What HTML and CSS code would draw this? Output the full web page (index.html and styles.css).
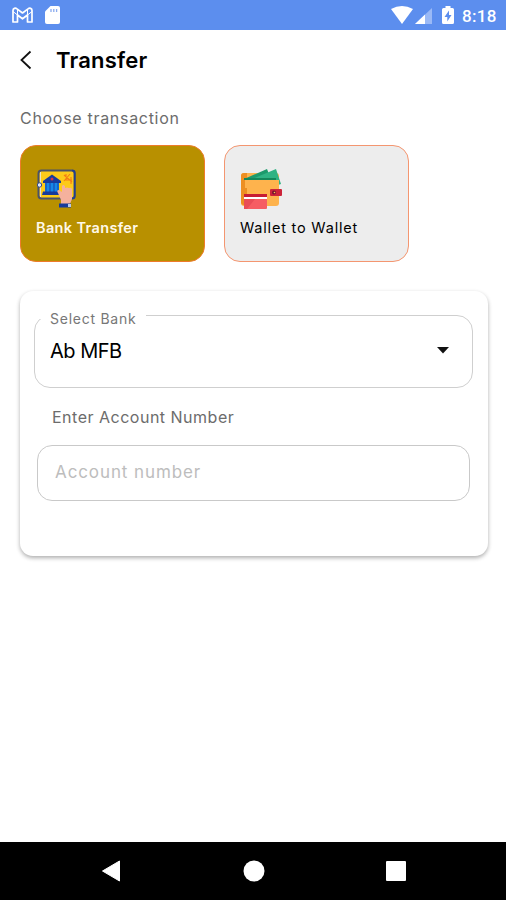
FILE: index.html
```html
<!DOCTYPE html>
<html lang="en">
<head>
  <meta charset="UTF-8" />
  <meta name="viewport" content="width=device-width, initial-scale=1.0" />
  <title>Transfer</title>
  <link rel="stylesheet" href="styles.css">
</head>
<body>
  <div class="status-bar">
    <div class="status-left">
      <svg width="21" height="17" viewBox="0 0 21 17" fill="none" stroke="#fff" stroke-width="1.7" stroke-linejoin="round">
        <path d="M1 15V3.5C1 1.2 3.4.6 5 1.9L10.5 6 16 1.9C17.6.6 20 1.2 20 3.5V15H15.5V8L10.5 11.8 5.5 8V15Z"/>
        <path d="M1 4.5L5.5 8V2.5M20 4.5L15.5 8V2.5" stroke-width="1"/>
      </svg>
      <svg width="17" height="20" viewBox="0 0 17 20">
        <path fill="#fff" d="M6.5 1H14a2 2 0 0 1 2 2V17a2 2 0 0 1-2 2H3a2 2 0 0 1-2-2V6.5Z"/>
        <path stroke="#8babef" stroke-width="1.3" d="M7 4V7M9.8 4V7M12.6 4V7"/>
      </svg>
    </div>
    <div class="status-right">
      <svg class="wifi" width="22" height="18" viewBox="0 0 22 18"><path fill="#fff" d="M0 3Q11-3 22 3L11 18Z"/></svg>
      <svg class="signal" width="17" height="16" viewBox="0 0 17 16"><path fill="#9ab9f6" d="M17 0V16H0Z"/><path fill="#fff" d="M10 6.5V16H0Z"/></svg>
      <svg class="battery" width="12" height="18" viewBox="0 0 12 18">
        <path fill="#fff" d="M3.5 2V0H8.5V2H10.5Q12 2 12 3.5V16.5Q12 18 10.5 18H1.5Q0 18 0 16.5V3.5Q0 2 1.5 2Z"/>
        <path fill="#5c8eee" d="M7 4.5L2.5 11H5.3V15.5L9.5 9H7Z"/>
      </svg>
      <span class="clock">8:18</span>
    </div>
  </div>

  <header class="header">
    <svg width="12" height="20" viewBox="0 0 12 20" fill="none" stroke="#111" stroke-width="1.8"><path d="M10.5 1.5L1.5 10L10.5 18.5"/></svg>
    <h1>Transfer</h1>
  </header>

  <main>
    <p class="choose">Choose transaction</p>
    <div class="options">
      <div class="option active">
        <svg width="42" height="42" viewBox="0 0 42 42">
          <rect x="2.5" y="2.5" width="36" height="28" rx="3" fill="#fdca19" stroke="#4b5268" stroke-width="2"/>
          <path d="M36 2.5H37Q38.8 2.5 38.8 5V28Q38.8 30.5 37 30.5H34" fill="none" stroke="#203f91" stroke-width="1.6"/>
          <path d="M4.5 4V29" stroke="#e9e3c5"/>
          <circle cx="3.5" cy="17" r="2.2" fill="#dce7fa" stroke="#374c86"/>
          <path fill="#173b9c" d="M7 13L16 6.5L25 13V15H7Z"/>
          <path fill="#1687e8" d="M9 15H23V24H9Z"/>
          <path stroke="#1453b8" stroke-width="1.3" d="M10 15V24M14 15V24M18 15V24M22 15V24"/>
          <path fill="#173b9c" d="M7 23.5H25V27H6Z"/>
          <circle cx="16" cy="11" r="1.5" fill="#d53645"/>
          <path fill="none" stroke="#f47b16" stroke-width="1.1" d="M28 7L36 14M28 13L34 6M30 6V12L36 12M35 9V16"/>
          <path fill="#f5b19d" d="M22 25Q20 22 23 22L26 24V18Q27 16 29 18V20Q31 19 33 20Q35 19 36 21V31L34 36H25V32Z"/>
          <rect x="23" y="35.5" width="12" height="4" fill="#173b9c"/>
          <path fill="#b9cbe7" d="M32 36H35V39H32Z"/>
        </svg>
        <span class="option-name">Bank Transfer</span>
      </div>
      <div class="option">
        <svg width="42" height="42" viewBox="0 0 42 42">
          <rect x="1" y="5" width="38" height="33" rx="3" fill="#feb34d"/>
          <path fill="#ed8f22" d="M4 5H7V37H4Q1 37 1 34V8Q1 5 4 5Z"/>
          <path fill="#1d9a6c" d="M4 11L27 1L31 11Z"/>
          <path fill="#2fb383" d="M12 11L36 1L41 16L38 17L36 12Z"/>
          <path fill="#148759" d="M4 10H36V12H4Z"/>
          <path fill="#feb34d" d="M5 12H39V20H5Z"/>
          <rect x="30" y="21" width="12" height="7" rx="1" fill="#cc2439"/>
          <circle cx="34" cy="24.5" r="2" fill="#74142e"/>
          <circle cx="34.5" cy="24.5" r=".8" fill="#ffc64d"/>
          <rect x="4" y="26" width="23" height="15" rx="1" fill="#f65d63"/>
          <path fill="#c71d34" d="M4 26H27V29H4Z"/>
          <path fill="#fff" d="M4 29H27V31H4Z"/>
          <path fill="#e94d57" d="M4 31H15L7 41H4Z"/>
        </svg>
        <span class="option-name">Wallet to Wallet</span>
      </div>
    </div>

    <section class="form-card">
      <fieldset class="bank">
        <legend>Select Bank</legend>
        <span class="bank-name">Ab MFB</span>
        <svg width="12" height="7" viewBox="0 0 12 7"><path fill="#111" d="M0 0H12L6 6.5Z"/></svg>
      </fieldset>
      <p class="account-label">Enter Account Number</p>
      <div class="account-input">Account number</div>
    </section>
  </main>

  <nav class="nav-bar">
    <svg width="20" height="22" viewBox="0 0 20 22"><path fill="#fff" stroke="#fff" stroke-linejoin="round" d="M1.5 11L18.5 1V21Z"/></svg>
    <svg width="22" height="22" viewBox="0 0 22 22"><circle cx="11" cy="11" r="10.5" fill="#fff"/></svg>
    <svg width="20" height="20" viewBox="0 0 20 20"><rect width="20" height="20" rx="1" fill="#fff"/></svg>
  </nav>
</body>
</html>
```
FILE: styles.css
```css
* { margin: 0; padding: 0; box-sizing: border-box; }
body {
  font-family: Inter, sans-serif;
  background: #fff;
  height: 900px;
  display: flex;
  flex-direction: column;
  overflow: hidden;
  color: #000;
  white-space: nowrap;
}
svg { display: block; flex: none; }
.status-bar {
  height: 30px;
  background: #5c8eee;
  display: flex;
  justify-content: space-between;
  padding: 0 9px 0 12px;
}
.status-left {
  display: flex;
  align-items: center;
  gap: 11px;
}
.status-right {
  display: flex;
  align-items: flex-end;
  padding-bottom: 6px;
}
.signal { margin-left: 2px; }
.battery { margin-left: 10px; }
.clock {
  width: 35px;
  margin-left: 8px;
  font: 500 17px/16px Roboto, sans-serif;
  letter-spacing: 0.3px;
  color: #fff;
}
.header {
  height: 60px;
  display: flex;
  align-items: center;
  padding-left: 20px;
  gap: 24px;
}
h1 {
  font-size: 22px;
  font-weight: 600;
  line-height: 30px;
  letter-spacing: 0.2px;
}
main { flex: 1; padding: 0 18px 0 20px; }
.choose {
  height: 55px;
  padding-top: 16px;
  font-size: 16px;
  line-height: 24px;
  letter-spacing: 0.7px;
  color: #6c6c6c;
}
.options { display: flex; gap: 19px; }
.option {
  width: 185px;
  height: 117px;
  border: 1px solid #f49670;
  border-radius: 16px;
  background: #ededed;
  padding: 22px 15px 0;
}
.option.active {
  background: #b89000;
  border-color: #ee7b2a;
  color: #fff8e8;
}
.option-name {
  display: block;
  margin-top: 7px;
  font-size: 14.5px;
  line-height: 22px;
  letter-spacing: 0.8px;
}
.active .option-name {
  font-weight: 600;
  letter-spacing: 0.35px;
}
.form-card {
  height: 265px;
  margin-top: 29px;
  padding: 20px 15px 0 14px;
  border-radius: 13px;
  box-shadow: 0 2px 4px rgba(0, 0, 0, 0.32);
}
.bank {
  height: 77px;
  border: 1px solid #cfcfcf;
  border-radius: 16px;
  padding: 0 23px 5px 15px;
  display: flex;
  justify-content: space-between;
  align-items: center;
}
/* shorter than its text so the border line sits a bit above the middle */
legend {
  height: 8px;
  margin-left: -10px;
  padding: 0 10px;
  font-size: 14px;
  line-height: 15px;
  letter-spacing: 0.75px;
  color: #777;
}
.bank-name {
  font-size: 20px;
  line-height: 26px;
  letter-spacing: -0.5px;
}
.account-label {
  margin: 17px 0 0 18px;
  font-size: 16px;
  line-height: 24px;
  letter-spacing: 0.5px;
  color: #6c6c6c;
}
.account-input {
  height: 56px;
  margin: 16px 3px 0;
  border: 1px solid #c9c9c9;
  border-radius: 15px;
  padding: 14px 17px;
  font-size: 17px;
  line-height: 24px;
  letter-spacing: 0.9px;
  color: #bdbdbd;
}
.nav-bar {
  height: 58px;
  background: #000;
  display: flex;
  justify-content: space-between;
  align-items: center;
  padding: 0 100px 0 101px;
}
```
